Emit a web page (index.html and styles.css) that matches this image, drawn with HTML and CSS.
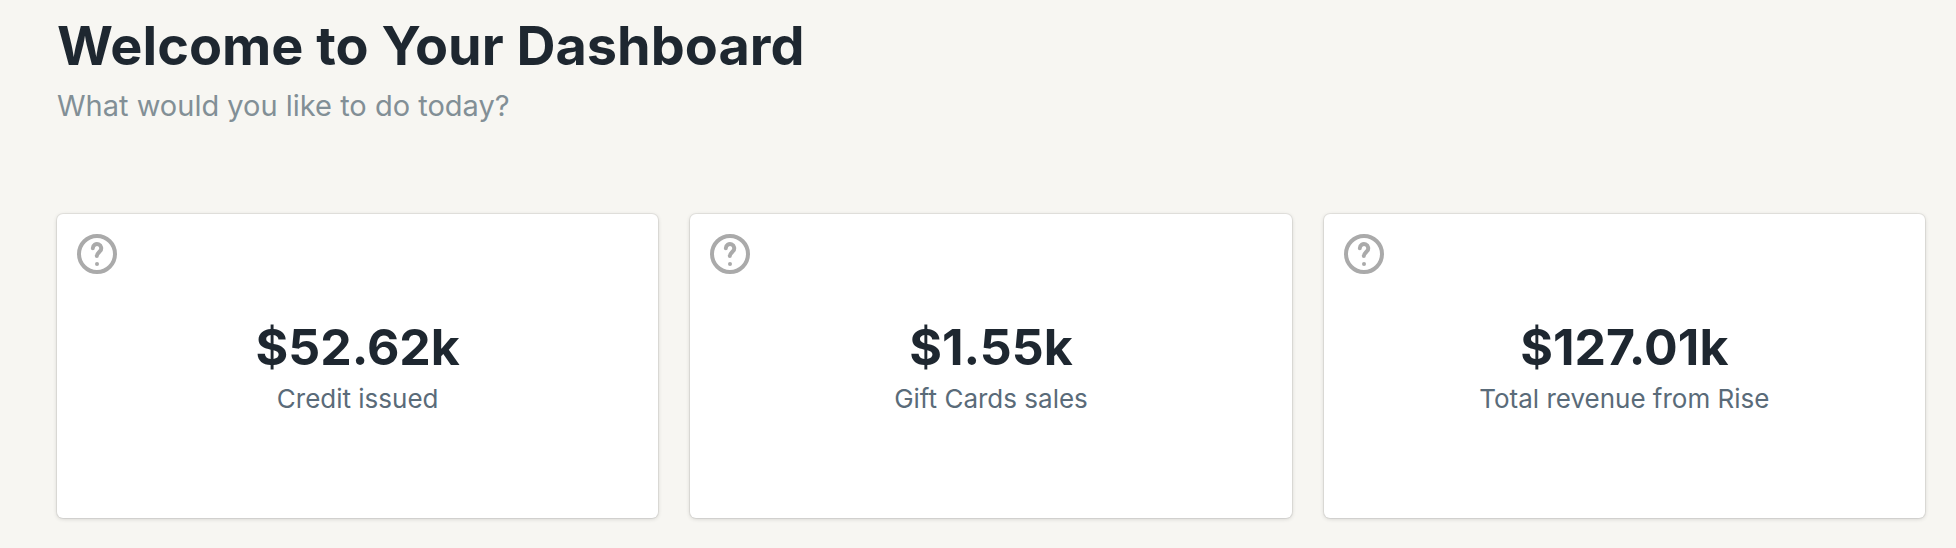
FILE: index.html
```html
<!DOCTYPE html>
<html lang="en">
<head>
<meta charset="utf-8">
<title>Dashboard</title>
<link rel="stylesheet" href="styles.css">
</head>
<body>
<main class="dashboard">
  <header class="intro">
    <h1 class="title">Welcome to Your Dashboard</h1>
    <p class="subtitle">What would you like to do today?</p>
  </header>
  <section class="cards" aria-label="Statistics">
    <article class="card">
      <button class="help" type="button" aria-label="About credit issued"><svg class="icon" viewBox="0 0 40 40"><circle cx="20" cy="20" r="18"/><path d="M15.8 14.2a4.2 4.2 0 1 1 7.2 3c-1.8 1.8-3.2 2.8-3.2 4.8"/><circle class="dot" cx="20" cy="30" r="2"/></svg></button>
      <p class="value">$52.62k</p>
      <p class="label">Credit issued</p>
    </article>
    <article class="card">
      <button class="help" type="button" aria-label="About gift cards sales"><svg class="icon" viewBox="0 0 40 40"><circle cx="20" cy="20" r="18"/><path d="M15.8 14.2a4.2 4.2 0 1 1 7.2 3c-1.8 1.8-3.2 2.8-3.2 4.8"/><circle class="dot" cx="20" cy="30" r="2"/></svg></button>
      <p class="value">$1.55k</p>
      <p class="label">Gift Cards sales</p>
    </article>
    <article class="card">
      <button class="help" type="button" aria-label="About total revenue from Rise"><svg class="icon" viewBox="0 0 40 40"><circle cx="20" cy="20" r="18"/><path d="M15.8 14.2a4.2 4.2 0 1 1 7.2 3c-1.8 1.8-3.2 2.8-3.2 4.8"/><circle class="dot" cx="20" cy="30" r="2"/></svg></button>
      <p class="value">$127.01k</p>
      <p class="label">Total revenue from Rise</p>
    </article>
  </section>
</main>
</body>
</html>
```
FILE: styles.css
```css
* { box-sizing: border-box; }
body {
  margin: 0;
  background: #f7f6f2;
  color: #1e2730;
  font-family: Inter, sans-serif;
}
.dashboard { padding: 10px 31px 30px 57px; }
.intro { margin-bottom: 88px; }
.title { margin: 0; font-size: 54px; line-height: 72px; font-weight: 700; }
.subtitle { margin: 4px 0 0; font-size: 29px; line-height: 40px; color: #828f96; }
.cards { display: grid; grid-template-columns: repeat(3, 1fr); gap: 32px; }
.card {
  display: flex;
  flex-direction: column;
  align-items: center;
  padding: 20px 20px 102px;
  border-radius: 6px;
  background: #fff;
  box-shadow: 0 0 0 1px rgba(0, 0, 0, 0.06), 0 1px 4px rgba(0, 0, 0, 0.16);
}
.help {
  align-self: flex-start;
  padding: 0;
  border: 0;
  background: none;
  color: #aaa;
  cursor: pointer;
}
.icon { display: block; width: 40px; height: 40px; fill: none; stroke: currentColor; stroke-width: 4; stroke-linecap: round; }
.dot { fill: currentColor; stroke: none; }
.value { margin: 38px 0 0; font-size: 50px; line-height: 70px; font-weight: 700; }
.label { margin: 0; font-size: 26px; line-height: 34px; color: #5a6b79; }
```
